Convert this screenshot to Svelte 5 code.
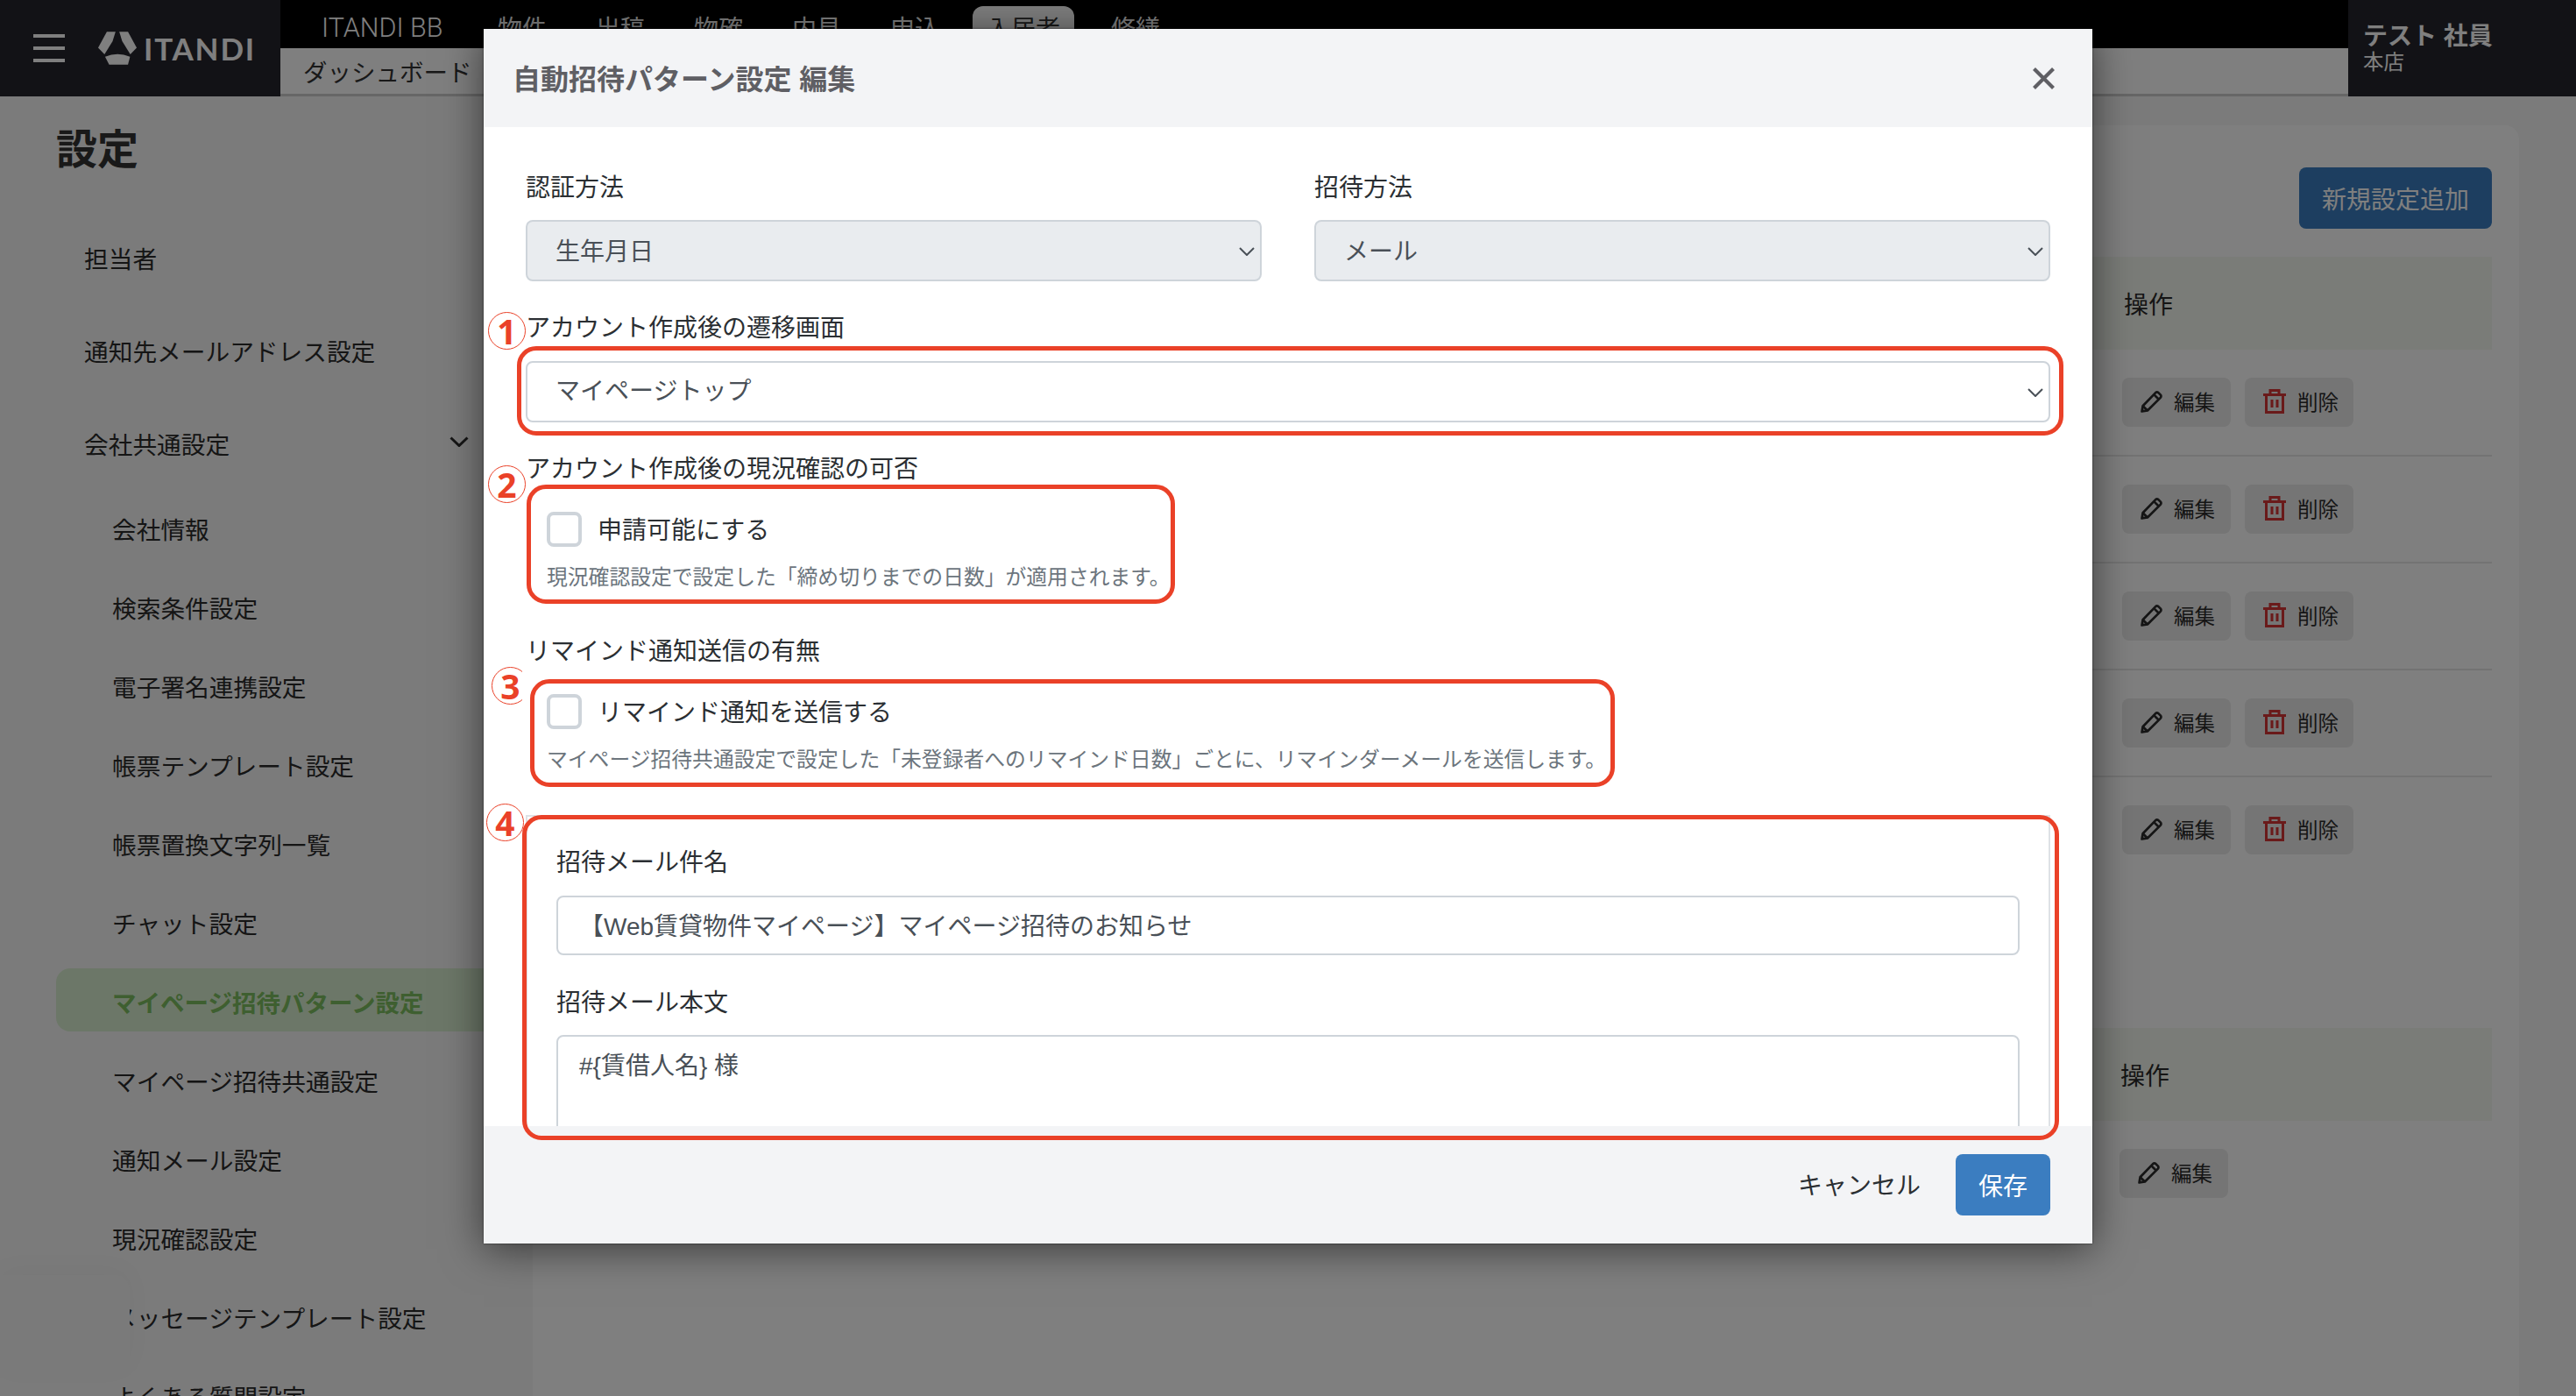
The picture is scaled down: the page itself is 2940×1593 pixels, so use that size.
<script>
  const topTabs = ['物件', '出稿', '物確', '内見', '申込'];
  const mainMenu = ['担当者', '通知先メールアドレス設定', '会社共通設定'];
  const subMenu = [
    '会社情報',
    '検索条件設定',
    '電子署名連携設定',
    '帳票テンプレート設定',
    '帳票置換文字列一覧',
    'チャット設定',
    'マイページ招待パターン設定',
    'マイページ招待共通設定',
    '通知メール設定',
    '現況確認設定',
    'メッセージテンプレート設定',
    'よくある質問設定'
  ];
  const activeItem = 'マイページ招待パターン設定';
  const rows = [1, 2, 3, 4, 5];
  const mailBody = '#{賃借人名} 様\n\n';
</script>

{#snippet pencil()}
  <svg class="btn-icon" viewBox="0 0 24 24" fill="none" stroke="currentColor" stroke-width="2.6" stroke-linejoin="round">
    <path d="M1.5 22.5 L2.5 16.5 L16.5 2 Q18 0.8 19.6 2 L22 4.4 Q23 5.8 22 7.3 L7.6 21.6 Z" />
    <path d="M2.5 16.5 L7.6 21.6" />
    <path d="M14.6 4 L20 9.4" />
  </svg>
{/snippet}

{#snippet trash()}
  <svg class="btn-icon trash" viewBox="0 0 26 28" fill="none" stroke="currentColor" stroke-width="3">
    <path d="M0 6.5 H26" />
    <path d="M8 6 V1.5 H18 V6" />
    <path d="M3.5 6.5 V26.5 H22.5 V6.5" />
    <path d="M10 12 V21 M16 12 V21" />
  </svg>
{/snippet}

{#snippet chevron()}
  <svg class="chevron" viewBox="0 0 18 10" fill="none" stroke="currentColor" stroke-width="2">
    <path d="M1 1 L9 9 L17 1" />
  </svg>
{/snippet}

{#snippet actions(withDelete)}
  <div class="actions">
    <button class="small-btn">{@render pencil()}編集</button>
    {#if withDelete}
      <button class="small-btn">{@render trash()}削除</button>
    {/if}
  </div>
{/snippet}

<div class="page">
  <header class="topbar">
    <div class="brand">
      <svg class="burger" viewBox="0 0 36 32" fill="currentColor">
        <rect x="0" y="0" width="36" height="4" />
        <rect x="0" y="14" width="36" height="4" />
        <rect x="0" y="28" width="36" height="4" />
      </svg>
      <svg class="logo" viewBox="0 0 133 113" fill="currentColor">
        <path d="M30 0 H60 L50 32 L22 78 L0 55 Z" />
        <path d="M103 0 H73 L83 32 L111 78 L133 55 Z" />
        <path d="M24 86 Q67 68 110 86 L103 113 L38 113 Z" />
      </svg>
      <span class="wordmark">ITANDI</span>
    </div>
    <div class="nav">
      <div class="nav-top">
        <span class="product">ITANDI BB</span>
        {#each topTabs as tab}
          <span class="tab">{tab}</span>
        {/each}
        <span class="tab active">入居者</span>
        <span class="tab">修繕</span>
      </div>
      <div class="nav-sub">
        <span>ダッシュボード</span>
      </div>
    </div>
    <div class="user">
      <div class="user-name">テスト 社員</div>
      <div class="user-shop">本店</div>
    </div>
  </header>

  <div class="content">
    <aside class="sidebar">
      <h1>設定</h1>
      <ul class="menu">
        {#each mainMenu as item}
          <li class="menu-item top">
            <span>{item}</span>
            {#if item === '会社共通設定'}
              <svg class="menu-chevron" viewBox="0 0 22 12" fill="none" stroke="currentColor" stroke-width="3">
                <path d="M1.5 1.5 L11 10.5 L20.5 1.5" />
              </svg>
            {/if}
          </li>
        {/each}
        {#each subMenu as item}
          <li class="menu-item sub" class:current={item === activeItem}><span>{item}</span></li>
        {/each}
      </ul>
    </aside>

    <main class="main">
      <section class="card">
        <div class="card-top">
          <button class="add-btn">新規設定追加</button>
        </div>
        <div class="table-head">
          <span class="op-title">操作</span>
        </div>
        {#each rows as row}
          <div class="table-row" class:last={row === rows.length}>
            {@render actions(true)}
          </div>
        {/each}
        <div class="table-head second">
          <span class="op-title">操作</span>
        </div>
        <div class="table-row second">
          {@render actions(false)}
        </div>
      </section>
    </main>
  </div>

  <div class="chat-widget"></div>
  <div class="backdrop"></div>

  <div class="modal">
    <div class="modal-header">
      <h2>自動招待パターン設定 編集</h2>
      <svg class="close" viewBox="0 0 25 25" fill="none" stroke="currentColor" stroke-width="4.2">
        <path d="M1.5 1.5 L23.5 23.5 M23.5 1.5 L1.5 23.5" />
      </svg>
    </div>

    <div class="modal-body">
      <div class="two-cols">
        <div>
          <div class="label">認証方法</div>
          <div class="select-wrap">
            <select class="control" disabled><option>生年月日</option></select>
            {@render chevron()}
          </div>
        </div>
        <div>
          <div class="label">招待方法</div>
          <div class="select-wrap">
            <select class="control" disabled><option>メール</option></select>
            {@render chevron()}
          </div>
        </div>
      </div>

      <div class="label after-control">アカウント作成後の遷移画面</div>
      <div class="select-wrap">
        <select class="control"><option>マイページトップ</option></select>
        {@render chevron()}
      </div>

      <div class="label after-control">アカウント作成後の現況確認の可否</div>
      <label class="check-row">
        <input type="checkbox" />
        <span>申請可能にする</span>
      </label>
      <div class="help">現況確認設定で設定した「締め切りまでの日数」が適用されます。</div>

      <div class="label after-help">リマインド通知送信の有無</div>
      <label class="check-row">
        <input type="checkbox" />
        <span>リマインド通知を送信する</span>
      </label>
      <div class="help">マイページ招待共通設定で設定した「未登録者へのリマインド日数」ごとに、リマインダーメールを送信します。</div>

      <div class="mail-card">
        <div class="label">招待メール件名</div>
        <input class="control text" type="text" value="【Web賃貸物件マイページ】マイページ招待のお知らせ" />
        <div class="label mail-body-label">招待メール本文</div>
        <textarea class="control text area" value={mailBody}></textarea>
      </div>
    </div>

    <div class="modal-footer">
      <span class="cancel">キャンセル</span>
      <button class="save">保存</button>
    </div>

    <div class="mark box-1"></div>
    <div class="mark box-2"></div>
    <div class="mark box-3"></div>
    <div class="mark box-4"></div>
    <span class="num num-1">1</span>
    <span class="num num-2">2</span>
    <span class="num num-3">3</span>
    <span class="num num-4">4</span>
  </div>
</div>

<style>
  :global(body) {
    margin: 0;
    background: #f6f6f6;
  }

  .page {
    position: relative;
    width: 2940px;
    height: 1593px;
    overflow: hidden;
    background: #f6f6f6;
    color: #2b2b2b;
    font-family: "Liberation Sans", "Noto Sans CJK JP", sans-serif;
    font-size: 28px;
  }

  /* header */
  .topbar {
    display: flex;
    height: 110px;
    background: #000;
  }

  .brand {
    display: flex;
    align-items: center;
    flex: none;
    width: 320px;
    box-sizing: border-box;
    padding-left: 38px;
    background: #24242c;
    color: #fff;
  }

  .burger {
    width: 36px;
    height: 32px;
  }

  .logo {
    width: 44px;
    height: 38px;
    margin-left: 38px;
  }

  .wordmark {
    margin-left: 8px;
    font-family: "Lato", sans-serif;
    font-weight: 700;
    font-size: 35px;
    letter-spacing: 1.8px;
  }

  .nav {
    display: flex;
    flex-direction: column;
    flex: 1;
  }

  .nav-top {
    display: flex;
    align-items: flex-end;
    height: 55px;
    box-sizing: border-box;
    padding-left: 47px;
    color: #fff;
  }

  .product {
    flex: none;
    width: 143px;
    align-self: center;
    margin-top: 7px;
    margin-right: 36px;
    font-family: "Roboto", sans-serif;
    font-weight: 300;
    font-size: 30.5px;
    white-space: nowrap;
  }

  .tab {
    display: flex;
    align-items: center;
    height: 48px;
    padding: 0 22px;
    margin-right: 12px;
    border-radius: 12px 12px 0 0;
    font-size: 28px;
  }

  .tab.active {
    padding: 0 16px;
    margin: 0 20px 0 4px;
    background: #fff;
    color: #333;
  }

  .nav-sub {
    display: flex;
    align-items: center;
    height: 55px;
    box-sizing: border-box;
    padding-left: 26px;
    background: #fff;
    border-bottom: 3px solid #ccc;
    font-size: 27.5px;
    color: #333;
  }

  .user {
    flex: none;
    width: 260px;
    box-sizing: border-box;
    padding: 24px 0 0 17px;
    background: #24242c;
    color: #fff;
  }

  .user-name {
    font-size: 28px;
    font-weight: 700;
    line-height: 36px;
    white-space: pre;
  }

  .user-shop {
    font-size: 23.5px;
    line-height: 22px;
  }

  /* page below the dialog */
  .content {
    display: flex;
  }

  .sidebar {
    flex: none;
    width: 608px;
    box-sizing: border-box;
  }

  h1 {
    margin: 31px 0 55px 64px;
    font-size: 47px;
    line-height: 60px;
    font-weight: 700;
    color: #333;
  }

  .menu {
    margin: 0;
    padding: 0;
    list-style: none;
    font-size: 27.7px;
  }

  .menu-item {
    display: flex;
    align-items: center;
    height: 72px;
    margin-left: 64px;
    white-space: nowrap;
  }

  .menu-item span {
    padding-top: 3px;
  }

  .menu-item.top {
    justify-content: space-between;
    padding-left: 32px;
    padding-right: 73px;
    margin-bottom: 34px;
  }

  .menu-item.top:nth-child(3) {
    margin-bottom: 25px;
  }

  .menu-chevron {
    width: 22px;
    height: 12px;
  }

  .menu-item.sub {
    padding-left: 64px;
    margin-bottom: 18px;
  }

  .menu-item.current {
    background: #d9efd0;
    border-radius: 16px 0 0 16px;
    color: #7cbe60;
    font-weight: 700;
    font-size: 27.5px;
  }

  .main {
    flex: 1;
    padding: 33px 65px 0 0;
  }

  .card {
    height: 1500px;
    box-sizing: border-box;
    padding: 48px 31px 0 0;
    background: #fff;
    border-radius: 16px;
  }

  .card-top {
    display: flex;
    justify-content: flex-end;
    margin-bottom: 32px;
  }

  .add-btn {
    width: 220px;
    height: 70px;
    padding: 0;
    border: none;
    border-radius: 8px;
    background: #3b7dc0;
    color: #fff;
    font: inherit;
  }

  .table-head {
    display: flex;
    align-items: center;
    justify-content: flex-end;
    height: 106px;
    background: #f5f8f0;
  }

  .op-title {
    width: 420px;
  }

  .table-head.second {
    margin-top: 166px;
  }

  .table-head.second .op-title {
    width: 424px;
  }

  .table-row {
    display: flex;
    align-items: center;
    justify-content: flex-end;
    height: 120px;
    border-bottom: 2px solid #e6e6e6;
  }

  .table-row.last {
    border-bottom: none;
  }

  .actions {
    display: flex;
    gap: 16px;
    width: 422px;
  }

  .table-row.second {
    border-bottom: none;
  }

  .table-row.second .actions {
    width: 425px;
  }

  .small-btn {
    display: flex;
    align-items: center;
    gap: 13px;
    width: 124px;
    height: 56px;
    padding: 0 0 2px 21px;
    border: none;
    border-radius: 8px;
    background: #eaeaea;
    color: #2b2b2b;
    font-family: inherit;
    font-size: 23.5px;
  }

  .btn-icon {
    flex: none;
    width: 25px;
    height: 25px;
  }

  .btn-icon.trash {
    width: 26px;
    height: 28px;
    color: #d43434;
  }

  .chat-widget {
    position: absolute;
    left: 0;
    top: 1455px;
    width: 148px;
    height: 112px;
    border-radius: 0 16px 16px 0;
    background: #f4f4f4;
    box-shadow: 0 -6px 30px rgba(0, 0, 0, 0.03);
  }

  .backdrop {
    position: absolute;
    inset: 0;
    background: rgba(0, 0, 0, 0.5);
  }

  /* dialog */
  .modal {
    position: absolute;
    left: 552px;
    top: 33px;
    display: flex;
    flex-direction: column;
    width: 1836px;
    height: 1386px;
    background: #fff;
    box-shadow: 0 6px 44px rgba(0, 0, 0, 0.55), 0 0 2px rgba(0, 0, 0, 0.6);
  }

  .modal-header {
    display: flex;
    align-items: center;
    justify-content: space-between;
    flex: none;
    height: 112px;
    padding: 0 43px 0 33px;
    background: #f3f4f6;
    color: #5f5f64;
  }

  h2 {
    margin: -3px 0 0;
    font-size: 32px;
    font-weight: 700;
  }

  .close {
    width: 25px;
    height: 25px;
  }

  .modal-body {
    flex: 1;
    min-height: 0;
    overflow: hidden;
    padding: 50px 48px 0;
  }

  .two-cols {
    display: grid;
    grid-template-columns: 840px 840px;
    gap: 60px;
  }

  .label {
    height: 40px;
    line-height: 40px;
    margin-bottom: 16px;
    color: #2b2f33;
  }

  .label.after-control {
    margin-top: 34px;
    margin-bottom: 17px;
  }

  .label.after-help {
    margin-top: 48px;
    margin-bottom: 28px;
  }

  .label.after-control + .check-row {
    margin-top: 28px;
  }

  .select-wrap {
    position: relative;
    color: #495057;
  }

  .control {
    display: block;
    width: 100%;
    height: 70px;
    box-sizing: border-box;
    padding: 0 32px 2px;
    border: 2px solid #ced4da;
    border-radius: 8px;
    appearance: none;
    background: #fff;
    color: #495057;
    font: inherit;
    opacity: 1;
  }

  select.control:disabled {
    padding: 2px 32px 0;
    background: #e9ecef;
  }

  .chevron {
    position: absolute;
    right: 8px;
    top: 31px;
    width: 18px;
    height: 10px;
  }

  .check-row {
    display: flex;
    align-items: center;
    gap: 18px;
    height: 40px;
    margin-left: 24px;
    color: #2b2f33;
  }

  .check-row span {
    padding-bottom: 3px;
  }

  .check-row input {
    flex: none;
    width: 40px;
    height: 40px;
    margin: 0;
    border: 4px solid #ced4da;
    border-radius: 8px;
    appearance: none;
    background: #fff;
  }

  .help {
    margin: 18px 0 0 24px;
    font-size: 23.8px;
    line-height: 34px;
    color: #6c757d;
    white-space: nowrap;
  }

  .mail-card {
    margin-top: 46px;
    padding: 33px 33px 0;
    height: 500px;
    border: 2px solid #dee2e6;
    box-sizing: border-box;
  }

  .mail-card .label {
    margin-bottom: 17px;
  }

  .mail-card .label.mail-body-label {
    margin-top: 35px;
    margin-bottom: 16px;
  }

  .text {
    padding: 0 24px 2px;
    height: 68px;
  }

  .area {
    height: 300px;
    padding-top: 14px;
    line-height: 40px;
    resize: none;
    overflow: hidden;
  }

  .modal-footer {
    position: relative;
    display: flex;
    align-items: center;
    justify-content: flex-end;
    gap: 40px;
    flex: none;
    height: 134px;
    padding-right: 48px;
    background: #f3f4f6;
  }

  .cancel {
    padding-bottom: 2px;
    color: #2b2f33;
  }

  .save {
    width: 108px;
    height: 70px;
    padding: 0;
    border: none;
    border-radius: 8px;
    background: #3b7dc0;
    color: #fff;
    font: inherit;
  }

  /* red annotations on top of the dialog */
  .mark {
    position: absolute;
    box-sizing: border-box;
    border: 5.5px solid #ea4128;
    border-radius: 22px;
  }

  .box-1 { left: 38px; top: 362px; width: 1765px; height: 102px; }
  .box-2 { left: 49px; top: 520px; width: 740px; height: 136px; }
  .box-3 { left: 53px; top: 742px; width: 1238px; height: 123px; }
  .box-4 { left: 44px; top: 897px; width: 1754px; height: 371px; }

  .num {
    position: absolute;
    display: flex;
    align-items: center;
    justify-content: center;
    width: 43px;
    height: 43px;
    box-sizing: border-box;
    border: 1.5px solid #ea4128;
    border-radius: 50%;
    color: #ea4128;
    font-family: "Noto Sans", sans-serif;
    font-size: 39px;
    font-weight: 700;
    line-height: 1;
  }

  .num-1 { left: 5px; top: 323px; }
  .num-2 { left: 5px; top: 498px; }
  .num-3 { left: 9px; top: 728px; clip-path: inset(-2px 8px -2px -2px); }
  .num-4 { left: 3px; top: 884px; }
</style>
